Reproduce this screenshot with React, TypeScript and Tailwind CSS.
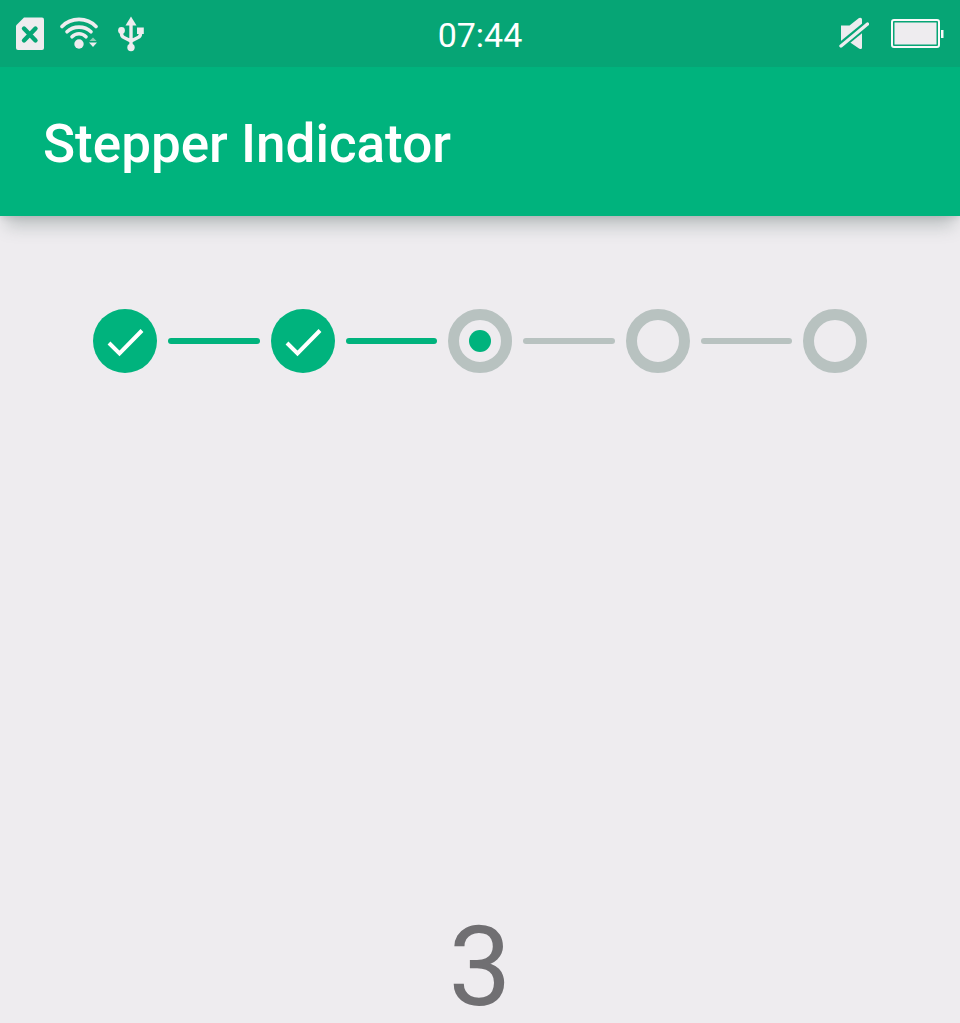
type StepState = "done" | "current" | "upcoming";

const TOTAL_STEPS = 5;
const CURRENT_STEP = 3;

function SimIcon() {
  return (
    <svg viewBox="0 0 28 34" className="h-[34px] w-7" aria-hidden="true">
      <path d="M8 0.500H26Q28 0.500 28 2.500V31Q28 33 26 33H2Q0 33 0 31V8.500Z" fill="#eeecef" />
      <path d="M8 11.500L19.500 23.500M19.500 11.500L8 23.500" stroke="#06a575" strokeWidth="4.400" strokeLinecap="round" />
    </svg>
  );
}

function WifiIcon() {
  return (
    <svg viewBox="0 0 38 34" className="h-[34px] w-[38px]" fill="none" aria-hidden="true">
      <g stroke="#eeecef" strokeWidth="3.6" strokeLinecap="round">
        <path d="M2 9.500C11 0 27 0 36 9.500" />
        <path d="M7 14.800C13.500 8.500 24.500 8.500 31 14.800" />
        <path d="M12 19.800C16 15.800 22 15.800 26 19.800" />
      </g>
      <circle cx="19" cy="27" r="4.700" fill="#eeecef" />
      <path d="M29.500 24L33 20.500L36.500 24Z" fill="#8bcdb5" />
      <path d="M29 25.500H37L33 30Z" fill="#eeecef" />
    </svg>
  );
}

function UsbIcon() {
  return (
    <svg viewBox="0 0 26 36" className="h-9 w-[26px]" fill="none" aria-hidden="true">
      <path d="M13 6V31M3.500 14V17.500Q3.500 20.500 6 21.500L13 25L20 21.500Q22.500 20.500 22.500 17.500V14" stroke="#eeecef" strokeWidth="3.400" />
      <path d="M13 0.500L18.500 9.500H7.500Z" fill="#eeecef" />
      <circle cx="3.500" cy="14.500" r="3.400" fill="#eeecef" />
      <path d="M19 11.500H25.800V18H19Z" fill="#eeecef" />
      <circle cx="13" cy="31.500" r="3.700" fill="#eeecef" />
    </svg>
  );
}

function MutedIcon() {
  return (
    <svg viewBox="0 0 30 34" className="h-[34px] w-[30px]" aria-hidden="true">
      <path d="M2 8.500H10.500L20 1Q23 0 23 2.500V30.500Q23 33 20 31.500L10.500 25H2Z" fill="#eeecef" />
      <path d="M0.500 30L29.500 6" stroke="#06a575" strokeWidth="7.400" />
      <path d="M2 29L28.500 7" stroke="#eeecef" strokeWidth="3.400" strokeLinecap="round" />
    </svg>
  );
}

function BatteryIcon() {
  return (
    <svg viewBox="0 0 53 30" className="h-[30px] w-[53px]" aria-hidden="true">
      <rect x="1" y="1" width="47" height="27" rx="2" fill="none" stroke="#fafafa" strokeWidth="2" />
      <rect x="3.500" y="3.500" width="42" height="22" fill="#eeecef" />
      <rect x="50" y="11" width="2.500" height="8" fill="#fafafa" />
    </svg>
  );
}

function StepMarker({ step, state }: { step: number; state: StepState }) {
  const label = `Step ${step}, ${state}`;
  if (state === "done") {
    return (
      <li aria-label={label} className="size-16 shrink-0 rounded-full bg-[#00b37d]">
        <svg viewBox="0 0 64 64" className="size-16" fill="none" aria-hidden="true">
          <path d="M16 34L26.500 44.500L49 21.500" stroke="#fff" strokeWidth="4" />
        </svg>
      </li>
    );
  }
  return (
    <li
      aria-label={label}
      aria-current={state === "current" ? "step" : undefined}
      className="flex size-16 shrink-0 items-center justify-center rounded-full border-[11px] border-[#b8c2c0]"
    >
      {state === "current" && <span className="size-[22px] rounded-full bg-[#00b37d]" />}
    </li>
  );
}

function Stepper() {
  const items = [];
  for (let step = 1; step <= TOTAL_STEPS; step++) {
    const state: StepState = step < CURRENT_STEP ? "done" : step === CURRENT_STEP ? "current" : "upcoming";
    items.push(<StepMarker key={step} step={step} state={state} />);
    if (step < TOTAL_STEPS) {
      items.push(
        <li
          key={`line-${step}`}
          role="presentation"
          className={state === "done" ? "h-1.5 flex-1 rounded-full bg-[#00b37d]" : "h-1.5 flex-1 rounded-full bg-[#b8c2c0]"}
        />,
      );
    }
  }
  return <ol className="flex items-center gap-[11px]">{items}</ol>;
}

export default function App() {
  return (
    <div className="flex min-h-screen flex-col bg-[#eeecef] font-['Roboto',sans-serif]">
      <header className="shadow-[0_16px_16px_-6px_rgba(70,90,85,0.28),0_2px_6px_rgba(70,90,85,0.15)]">
        <div className="grid h-[67px] grid-cols-3 items-center bg-[#06a575] px-4">
          <div className="flex items-center gap-4">
            <SimIcon />
            <WifiIcon />
            <span className="pl-1"><UsbIcon /></span>
          </div>
          <time className="pt-0.5 text-center text-[34px] leading-10 text-white">07:44</time>
          <div className="flex items-center justify-end gap-[22px]">
            <MutedIcon />
            <BatteryIcon />
          </div>
        </div>
        <div className="flex h-[149px] items-center bg-[#00b37d] px-[43px] pt-1">
          <h1 className="text-[53px] leading-[60px] font-medium text-white">Stepper Indicator</h1>
        </div>
      </header>
      <main className="flex flex-1 flex-col justify-between px-[93px] pt-[93px]">
        <Stepper />
        <p className="text-center text-[112px] leading-[112px] text-[#706f72]">{CURRENT_STEP}</p>
      </main>
    </div>
  );
}
